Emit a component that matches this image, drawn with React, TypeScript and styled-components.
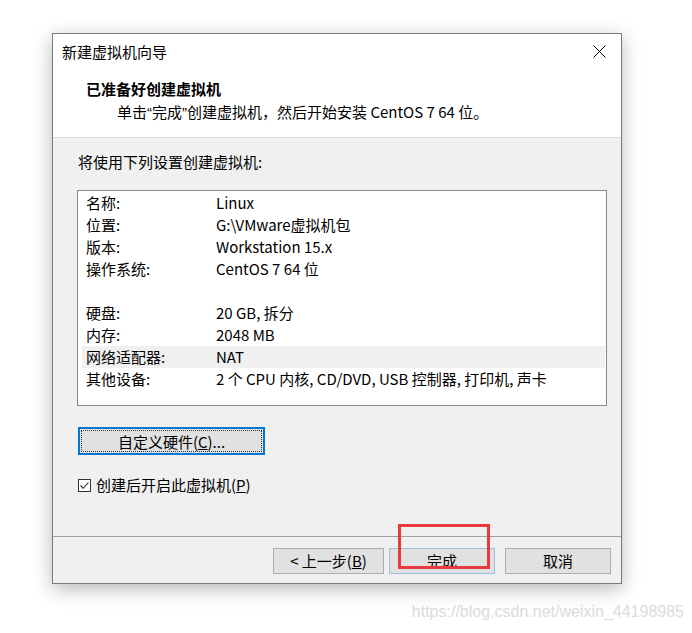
import React from "react";
import styled, { createGlobalStyle } from "styled-components";

const GlobalStyle = createGlobalStyle`
  html, body {
    margin: 0;
    padding: 0;
    background: #ffffff;
  }
  body {
    font-family: "Noto Sans CJK SC", "Microsoft YaHei", sans-serif;
    color: #000;
  }
`;

const Page = styled.div`
  width: 692px;
  height: 633px;
  padding: 33px 0 0 52px;
  box-sizing: border-box;
  overflow: hidden;
`;

const Window = styled.div`
  position: relative;
  width: 570px;
  height: 551px;
  box-sizing: border-box;
  border: 1px solid #7a7a7a;
  background: #f0f0f0;
  display: flex;
  flex-direction: column;
  box-shadow: 0 5px 18px rgba(0, 0, 0, 0.28);
`;

const TitleBar = styled.div`
  height: 37px;
  box-sizing: border-box;
  background: #fff;
  display: flex;
  align-items: center;
  justify-content: space-between;
  padding: 0 15px 2px 9px;
  font-size: 15px;
  line-height: 20px;
`;

const CloseButton = styled.div`
  width: 14px;
  height: 14px;
  display: flex;
  align-items: center;
  justify-content: center;
`;

const Header = styled.div`
  background: #fff;
  padding: 8px 0 15px 33px;
  border-bottom: 1px solid #dadada;
`;

const HeaderTitle = styled.div`
  font-size: 15px;
  line-height: 20px;
  font-weight: 700;
`;

const HeaderSub = styled.div`
  height: 20px;
  font-size: 15px;
  line-height: 20px;
  margin-top: 3px;
  padding-left: 31px;
`;

const Quote = styled.span`
  font-family: "Liberation Sans", Arial, sans-serif;
  line-height: 1;
`;

const Body = styled.div`
  flex: 1;
  padding: 14px 0 0 24px;
  font-size: 15px;
  line-height: 20px;
`;

const Intro = styled.div`
  padding-left: 1px;
`;

const SummaryBox = styled.div`
  margin-top: 18px;
  width: 530px;
  height: 216px;
  box-sizing: border-box;
  border: 1px solid #828790;
  background: #fff;
  padding: 1px 1px 0 4px;
`;

const Row = styled.div<{ $selected?: boolean }>`
  display: flex;
  height: 22px;
  align-items: center;
  padding-left: 4px;
  background: ${(p) => (p.$selected ? "#f0f0f0" : "transparent")};
`;

const Label = styled.span`
  width: 130px;
  flex-shrink: 0;
`;

const Value = styled.span`
  white-space: nowrap;
`;

const CustomButton = styled.button`
  position: relative;
  margin: 21px 0 0 1px;
  width: 187px;
  height: 28px;
  box-sizing: border-box;
  border: 2px solid #0078d7;
  background: #e1e1e1;
  font-family: inherit;
  font-size: 15px;
  color: #000;
  padding: 0;

  &::after {
    content: "";
    position: absolute;
    inset: 1px;
    border: 1px dotted #333;
  }
`;

const CheckRow = styled.label`
  display: flex;
  align-items: center;
  gap: 5px;
  margin: 20px 0 0 1px;
  line-height: 20px;
`;

const CheckBox = styled.span`
  width: 13px;
  height: 13px;
  box-sizing: border-box;
  border: 1px solid #333;
  background: #fff;
  display: flex;
  align-items: center;
  justify-content: center;
`;

const Footer = styled.div`
  height: 47px;
  box-sizing: border-box;
  border-top: 1px solid #a0a0a0;
  display: flex;
  justify-content: flex-end;
  align-items: flex-start;
  padding: 11px 10px 0 0;
`;

const DialogButton = styled.button<{ $width: number; $gap?: number; $default?: boolean }>`
  width: ${(p) => p.$width}px;
  height: 26px;
  margin-left: ${(p) => p.$gap ?? 0}px;
  box-sizing: border-box;
  border: 1px solid ${(p) => (p.$default ? "#9fbfe0" : "#adadad")};
  background: #e1e1e1;
  font-family: inherit;
  font-size: 15px;
  line-height: 20px;
  color: #000;
  padding: 0;
`;

const Annotation = styled.div`
  position: absolute;
  left: 345px;
  top: 490px;
  width: 92px;
  height: 45px;
  box-sizing: border-box;
  border: 3px solid #e8393e;
  pointer-events: none;
`;

const Watermark = styled.div`
  margin-top: 18px;
  padding-right: 8px;
  text-align: right;
  font-family: "Liberation Sans", Arial, sans-serif;
  font-size: 16px;
  line-height: 20px;
  color: #dedede;
  text-shadow: 0 0 1px rgba(0, 0, 0, 0.06);
`;

const rows: { label: string; value: string; selected?: boolean }[] = [
  { label: "名称:", value: "Linux" },
  { label: "位置:", value: "G:\\VMware虚拟机包" },
  { label: "版本:", value: "Workstation 15.x" },
  { label: "操作系统:", value: "CentOS 7 64 位" },
  { label: "", value: "" },
  { label: "硬盘:", value: "20 GB, 拆分" },
  { label: "内存:", value: "2048 MB" },
  { label: "网络适配器:", value: "NAT", selected: true },
  { label: "其他设备:", value: "2 个 CPU 内核, CD/DVD, USB 控制器, 打印机, 声卡" },
];

const App: React.FC = () => {
  return (
    <>
      <GlobalStyle />
      <Page>
        <Window>
          <TitleBar>
            <span>新建虚拟机向导</span>
            <CloseButton>
              <svg width="13" height="13" viewBox="0 0 13 13">
                <path d="M0.5 0.5 L12.5 12.5 M12.5 0.5 L0.5 12.5" stroke="#000" strokeWidth="1" />
              </svg>
            </CloseButton>
          </TitleBar>
          <Header>
            <HeaderTitle>已准备好创建虚拟机</HeaderTitle>
            <HeaderSub>
              单击<Quote>“</Quote>完成<Quote>”</Quote>创建虚拟机，然后开始安装 CentOS 7 64 位。
            </HeaderSub>
          </Header>
          <Body>
            <Intro>将使用下列设置创建虚拟机:</Intro>
            <SummaryBox>
              {rows.map((r, i) => (
                <Row key={i} $selected={r.selected}>
                  <Label>{r.label}</Label>
                  <Value>{r.value}</Value>
                </Row>
              ))}
            </SummaryBox>
            <CustomButton>
              自定义硬件(<u>C</u>)...
            </CustomButton>
            <CheckRow>
              <CheckBox>
                <svg width="11" height="11" viewBox="0 0 11 11">
                  <path d="M1.5 5.5 L4.2 8.3 L9.5 2.5" fill="none" stroke="#222" strokeWidth="1.1" />
                </svg>
              </CheckBox>
              <span>
                创建后开启此虚拟机(<u>P</u>)
              </span>
            </CheckRow>
          </Body>
          <Footer>
            <DialogButton $width={111}>
              &lt; 上一步(<u>B</u>)
            </DialogButton>
            <DialogButton $width={106} $gap={5} $default>
              完成
            </DialogButton>
            <DialogButton $width={106} $gap={10}>
              取消
            </DialogButton>
          </Footer>
          <Annotation />
        </Window>
        <Watermark>https://blog.csdn.net/weixin_44198985</Watermark>
      </Page>
    </>
  );
};

export default App;
